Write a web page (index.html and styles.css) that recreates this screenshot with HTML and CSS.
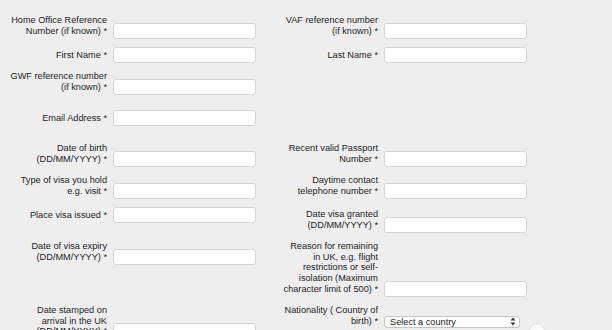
FILE: index.html
```html
<!DOCTYPE html>
<html lang="en">
<head>
    <meta charset="UTF-8">
    <meta name="viewport" content="width=device-width, initial-scale=1.0">
    <title>Application details</title>
    <link rel="stylesheet" href="styles.css">
</head>
<body>
    <form class="form-grid">
        <div class="field"><label class="lbl">Home Office Reference Number (if known) *</label><input class="txt" type="text"></div>
        <div class="field"><label class="lbl">VAF reference number (if known) *</label><input class="txt" type="text"></div>

        <div class="field"><label class="lbl">First Name *</label><input class="txt" type="text"></div>
        <div class="field"><label class="lbl">Last Name *</label><input class="txt" type="text"></div>

        <div class="field"><label class="lbl">GWF reference number (if known) *</label><input class="txt" type="text"></div>
        <div class="field"></div>

        <div class="field spaced"><label class="lbl">Email Address *</label><input class="txt" type="text"></div>
        <div class="field spaced"></div>

        <div class="field spaced-lg"><label class="lbl">Date of birth (DD/MM/YYYY) *</label><input class="txt" type="text"></div>
        <div class="field spaced-lg"><label class="lbl">Recent valid Passport Number *</label><input class="txt" type="text"></div>

        <div class="field"><label class="lbl">Type of visa you hold e.g. visit *</label><input class="txt" type="text"></div>
        <div class="field"><label class="lbl">Daytime contact telephone number *</label><input class="txt" type="text"></div>

        <div class="field"><label class="lbl">Place visa issued *</label><input class="txt" type="text"></div>
        <div class="field nudge"><label class="lbl">Date visa granted (DD/MM/YYYY) *</label><input class="txt" type="text"></div>

        <div class="field"><label class="lbl">Date of visa expiry (DD/MM/YYYY) *</label><input class="txt" type="text"></div>
        <div class="field"><label class="lbl">Reason for remaining in UK, e.g. flight restrictions or self-isolation (Maximum character limit of 500) *</label><input class="txt" type="text"></div>

        <div class="field"><label class="lbl">Date stamped on arrival in the UK (DD/MM/YYYY) *</label><input class="txt" type="text"></div>
        <div class="field"><label class="lbl">Nationality ( Country of birth) *</label><span class="select-wrap"><select class="sel">
                <option>Select a country</option>
                <option>United Kingdom</option>
                <option>Other</option>
            </select><svg class="sel-arrows" width="6" height="9" viewBox="0 0 6 9"><path d="M3 0.5L5.5 3.5H0.5Z M3 8.5L5.5 5.5H0.5Z" fill="#333"/></svg></span></div>
    </form>

    <div class="float-btn"></div>
</body>
</html>
```

FILE: styles.css
```css
body {
    margin: 0;
    padding: 0;
    background-color: #eeeeee;
    font-family: "Liberation Sans", Arial, sans-serif;
    font-size: 9.2px;
    color: #1c1c1c;
    overflow: hidden;
}
.form-grid {
    display: grid;
    grid-template-columns: 271px 271px;
    row-gap: 8.25px;
    padding: 15px 0 0 10px;
}
.field {
    line-height: 10.65px;
}
.spaced {
    margin-top: 7px;
}
.spaced-lg {
    margin-top: 9px;
}
.nudge {
    margin-top: 2px;
}
.lbl {
    display: inline-block;
    width: 97px;
    text-align: right;
    vertical-align: baseline;
}
.txt {
    width: 143px;
    height: 16px;
    box-sizing: border-box;
    margin: 0 0 0 6px;
    padding: 0 4px;
    border: 1px solid #d4d4d4;
    border-radius: 3px;
    background-color: #fff;
    font-family: inherit;
    font-size: 9.2px;
    vertical-align: baseline;
}
.select-wrap {
    position: relative;
    display: inline-block;
    margin-left: 6px;
    vertical-align: -1px;
}
.sel {
    -webkit-appearance: none;
    appearance: none;
    width: 136px;
    height: 12px;
    box-sizing: border-box;
    margin: 0;
    padding: 0 0 0 5px;
    border: 1px solid #c4c4c4;
    border-radius: 3px;
    background-color: #fff;
    font-family: inherit;
    font-size: 9.2px;
    line-height: 10px;
    color: #1c1c1c;
}
.sel-arrows {
    position: absolute;
    right: 4px;
    top: 1.5px;
    pointer-events: none;
}
.float-btn {
    position: absolute;
    left: 529px;
    top: 323px;
    width: 14px;
    height: 14px;
    border-radius: 50%;
    background-color: #fbfbfb;
    border: 1px solid #e2e2e2;
}
```
